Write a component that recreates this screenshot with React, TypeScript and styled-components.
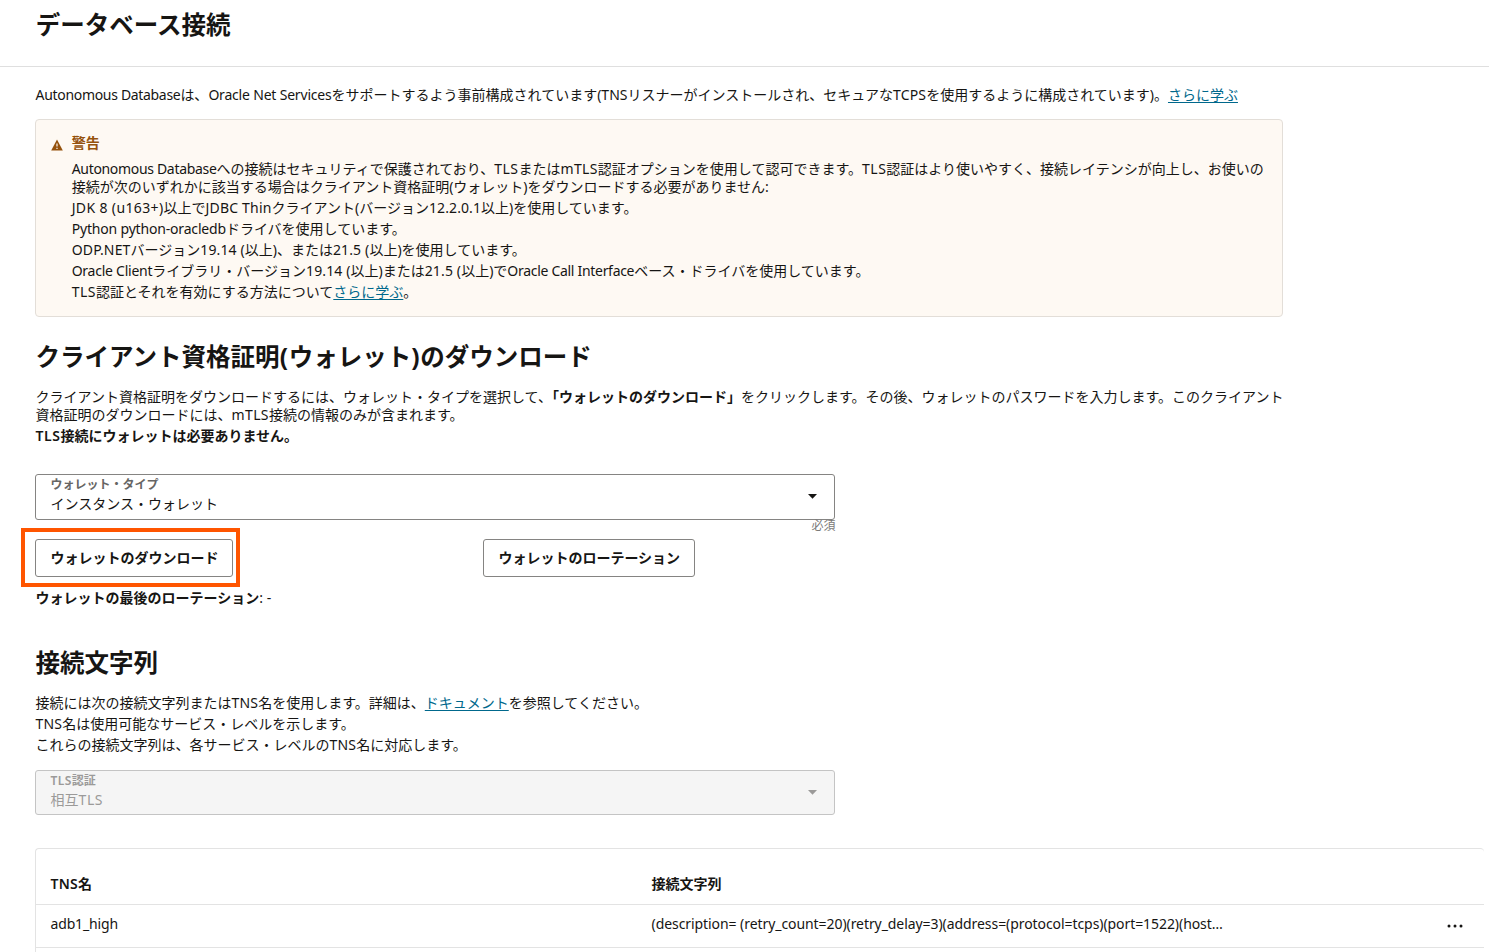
import React from 'react';
import styled, { createGlobalStyle } from 'styled-components';

const GlobalStyle = createGlobalStyle`
  *, *::before, *::after { box-sizing: border-box; }
  html, body { margin: 0; padding: 0; background: #fff; }
  body {
    font-family: "Noto Sans", "Noto Sans CJK JP", sans-serif;
    font-size: 14px;
    color: #161513;
    overflow: hidden;
  }
`;

const Page = styled.div`
  width: 100%;
  height: 952px;
  overflow: hidden;
`;

const Header = styled.header`
  height: 67px;
  padding: 7px 35.8px 0;
  border-bottom: 1px solid #dfdfdf;
`;

const Title = styled.h1`
  margin: 0;
  font-size: 24.5px;
  line-height: 36px;
  font-weight: 700;
`;

const Content = styled.main`
  display: flex;
  flex-direction: column;
  padding: 19px 0 0 35px;
`;

const Line = styled.p<{ $tight?: boolean }>`
  margin: 0;
  height: ${(p) => (p.$tight ? 18 : 21)}px;
  line-height: ${(p) => (p.$tight ? 18 : 21)}px;
  white-space: nowrap;
`;

const Latin = styled.span<{ $track?: number; $semi?: boolean }>`
  letter-spacing: ${(p) => p.$track ?? 0}px;
  font-weight: ${(p) => (p.$semi ? 600 : 'inherit')};
`;

const Link = styled.a`
  color: #00688c;
  text-decoration: underline;
  text-decoration-thickness: 1px;
  text-underline-offset: 2px;
`;

const Warning = styled.section`
  display: flex;
  gap: 8.7px;
  width: 1248px;
  height: 198px;
  margin-top: 15px;
  padding: 13px 15px 0;
  border: 1px solid #e3ded8;
  border-radius: 4px;
  background: #fef9f3;
`;

const WarningIcon = styled.svg`
  flex: none;
  width: 12px;
  height: 12px;
  margin-top: 6px;
`;

const WarningBody = styled.div`
  display: flex;
  flex-direction: column;
`;

const WarningTitle = styled.div`
  height: 27px;
  line-height: 20px;
  font-weight: 700;
  color: #95520c;
`;

const Paragraph = styled.div`
  padding-bottom: 1px;
`;

const SectionTitle = styled.h2<{ $top: number }>`
  margin: ${(p) => p.$top}px 0 0;
  padding-left: 0.6px;
  height: 36px;
  font-size: 24.5px;
  line-height: 36px;
  font-weight: 700;
  white-space: nowrap;
`;

const Copy = styled.div<{ $top: number }>`
  margin-top: ${(p) => p.$top}px;
  padding-left: 0.6px;
`;

const Select = styled.div<{ $disabled?: boolean; $top: number }>`
  display: flex;
  justify-content: space-between;
  width: 800px;
  height: ${(p) => (p.$disabled ? 45 : 46)}px;
  margin-top: ${(p) => p.$top}px;
  padding: 0 17.5px 0 14.5px;
  border: 1px solid ${(p) => (p.$disabled ? '#c4c4c4' : '#858482')};
  border-radius: 3px;
  background: ${(p) => (p.$disabled ? '#f5f5f5' : '#fff')};
  color: ${(p) => (p.$disabled ? '#9b9a99' : '#161513')};
`;

const SelectText = styled.div`
  display: flex;
  flex-direction: column;
`;

const SelectLabel = styled.span<{ $disabled?: boolean }>`
  height: 19px;
  font-size: 12px;
  line-height: 19px;
  font-weight: 600;
  color: ${(p) => (p.$disabled ? '#9b9a99' : '#666564')};
`;

const SelectValue = styled.span`
  line-height: 20px;
`;

const Caret = styled.svg`
  width: 9px;
  height: 5px;
  margin-top: 19px;
`;

const Required = styled.div`
  width: 800.5px;
  height: 19px;
  font-size: 12px;
  line-height: 12px;
  text-align: right;
  color: #7b7a79;
`;

const Actions = styled.div`
  display: grid;
  grid-template-columns: 448px auto;
  justify-content: start;
`;

const ButtonSlot = styled.div`
  position: relative;
  display: flex;
`;

const Button = styled.button`
  height: 38px;
  padding: 0 13.6px 0 14.4px;
  border: 1px solid #858482;
  border-radius: 3px;
  background: #fff;
  font: inherit;
  font-weight: 700;
  line-height: 36px;
  color: #161513;
`;

const Highlight = styled.span`
  position: absolute;
  top: -11px;
  left: -14px;
  width: 219px;
  height: 59px;
  border: 4px solid #ff5500;
  pointer-events: none;
`;

const Table = styled.div`
  height: 120px;
  margin-top: 33px;
  margin-right: 5px;
  border: solid #e3e3e3;
  border-width: 1px 0 0 1px;
  border-radius: 4px 4px 0 0;
`;

const Row = styled.div<{ $head?: boolean }>`
  display: grid;
  grid-template-columns: 601px 1fr 37.4px;
  align-items: center;
  height: ${(p) => (p.$head ? 56 : 43)}px;
  padding: ${(p) => (p.$head ? '12px 0 0 14.5px' : '0 0 5px 14.5px')};
  border-bottom: 1px solid #e3e3e3;
  font-weight: ${(p) => (p.$head ? 700 : 400)};
  white-space: nowrap;
`;

const Dots = styled.svg`
  width: 16px;
  height: 4px;
  margin-top: 4px;
`;

const Arrow = ({ color }: { color: string }) => (
  <Caret viewBox="0 0 9 5">
    <path d="M0 0H9L4.5 4.7Z" fill={color} />
  </Caret>
);

export default function App() {
  return (
    <Page>
      <GlobalStyle />
      <Header>
        <Title>データベース接続</Title>
      </Header>
      <Content>
        <Copy $top={0}>
          <Line $tight>
            <Latin $track={-0.32}>Autonomous Database</Latin>は、<Latin $track={-0.19}>Oracle Net Services</Latin>をサポートするよう事前構成されています(<Latin>TNS</Latin>リスナーがインストールされ、セキュアな<Latin $track={0.15}>TCPS</Latin>を使用するように構成されています)。<Link>さらに学ぶ</Link>
          </Line>
        </Copy>
        <Warning>
          <WarningIcon viewBox="0 0 12 12">
            <path d="M6 0.6 11.8 11.4H0.2Z" fill="#95520c" />
            <path d="M6 4.6V7.6M6 8.8V10" stroke="#fef9f3" strokeWidth="1.2" />
          </WarningIcon>
          <WarningBody>
            <WarningTitle>警告</WarningTitle>
            <Paragraph>
              <Line $tight>
                <Latin $track={-0.32}>Autonomous Database</Latin>への接続はセキュリティで保護されており、<Latin $track={0.5}>TLS</Latin>または<Latin $track={0.35}>mTLS</Latin>認証オプションを使用して認可できます。<Latin $track={0.5}>TLS</Latin>認証はより使いやすく、接続レイテンシが向上し、お使いの
              </Line>
              <Line $tight>接続が次のいずれかに該当する場合はクライアント資格証明(ウォレット)をダウンロードする必要がありません:</Line>
            </Paragraph>
            <Line><Latin $track={0.36}>JDK 8 (u163+)</Latin>以上で<Latin $track={0.2}>JDBC Thin</Latin>クライアント(バージョン<Latin $track={0.1}>12.2.0.1</Latin>以上)を使用しています。</Line>
            <Line><Latin $track={-0.18}>Python python-oracledb</Latin>ドライバを使用しています。</Line>
            <Line><Latin $track={0.15}>ODP.NET</Latin>バージョン<Latin $track={0.12}>19.14 (</Latin>以上)、または<Latin $track={0.14}>21.5 (</Latin>以上)を使用しています。</Line>
            <Line><Latin $track={-0.25}>Oracle Client</Latin>ライブラリ・バージョン<Latin $track={0.12}>19.14 (</Latin>以上)または<Latin $track={0.14}>21.5 (</Latin>以上)で<Latin $track={-0.3}>Oracle Call Interface</Latin>ベース・ドライバを使用しています。</Line>
            <Line><Latin $track={0.5}>TLS</Latin>認証とそれを有効にする方法について<Link>さらに学ぶ</Link>。</Line>
          </WarningBody>
        </Warning>

        <SectionTitle $top={22}>クライアント資格証明<Latin $track={0.8}>(</Latin>ウォレット<Latin $track={0.8}>)</Latin>のダウンロード</SectionTitle>
        <Copy $top={13}>
          <Paragraph>
            <Line $tight>クライアント資格証明をダウンロードするには、ウォレット・タイプを選択して、<b>「ウォレットのダウンロード」</b>をクリックします。その後、ウォレットのパスワードを入力します。このクライアント</Line>
            <Line $tight>資格証明のダウンロードには、<Latin $track={0.35}>mTLS</Latin>接続の情報のみが含まれます。</Line>
          </Paragraph>
          <Line><b><Latin $semi $track={0.5}>TLS</Latin>接続にウォレットは必要ありません。</b></Line>
        </Copy>
        <Select $top={28}>
          <SelectText>
            <SelectLabel>ウォレット・タイプ</SelectLabel>
            <SelectValue>インスタンス・ウォレット</SelectValue>
          </SelectText>
          <Arrow color="#161513" />
        </Select>
        <Required>必須</Required>
        <Actions>
          <ButtonSlot>
            <Button>ウォレットのダウンロード</Button>
            <Highlight />
          </ButtonSlot>
          <ButtonSlot>
            <Button>ウォレットのローテーション</Button>
          </ButtonSlot>
        </Actions>
        <Copy $top={10}>
          <Line><b>ウォレットの最後のローテーション</b>: -</Line>
        </Copy>

        <SectionTitle $top={37}>接続文字列</SectionTitle>
        <Copy $top={11}>
          <Line>接続には次の接続文字列または<Latin $track={0.15}>TNS</Latin>名を使用します。詳細は、<Link>ドキュメント</Link>を参照してください。</Line>
          <Line><Latin $track={0.15}>TNS</Latin>名は使用可能なサービス・レベルを示します。</Line>
          <Line>これらの接続文字列は、各サービス・レベルの<Latin $track={0.15}>TNS</Latin>名に対応します。</Line>
        </Copy>
        <Select $disabled $top={15}>
          <SelectText>
            <SelectLabel $disabled><Latin $track={0.4}>TLS</Latin>認証</SelectLabel>
            <SelectValue>相互<Latin $track={0.6}>TLS</Latin></SelectValue>
          </SelectText>
          <Arrow color="#9b9a99" />
        </Select>

        <Table>
          <Row $head>
            <span><Latin $semi $track={0.2}>TNS</Latin>名</span>
            <span>接続文字列</span>
          </Row>
          <Row>
            <Latin $track={-0.15}>adb1_high</Latin>
            <Latin $track={-0.07}>(description= (retry_count=20)(retry_delay=3)(address=(protocol=tcps)(port=1522)(host…</Latin>
            <Dots viewBox="0 0 16 4">
              <circle cx="2" cy="2" r="1.5" fill="#161513" />
              <circle cx="8" cy="2" r="1.5" fill="#161513" />
              <circle cx="14" cy="2" r="1.5" fill="#161513" />
            </Dots>
          </Row>
        </Table>
      </Content>
    </Page>
  );
}
